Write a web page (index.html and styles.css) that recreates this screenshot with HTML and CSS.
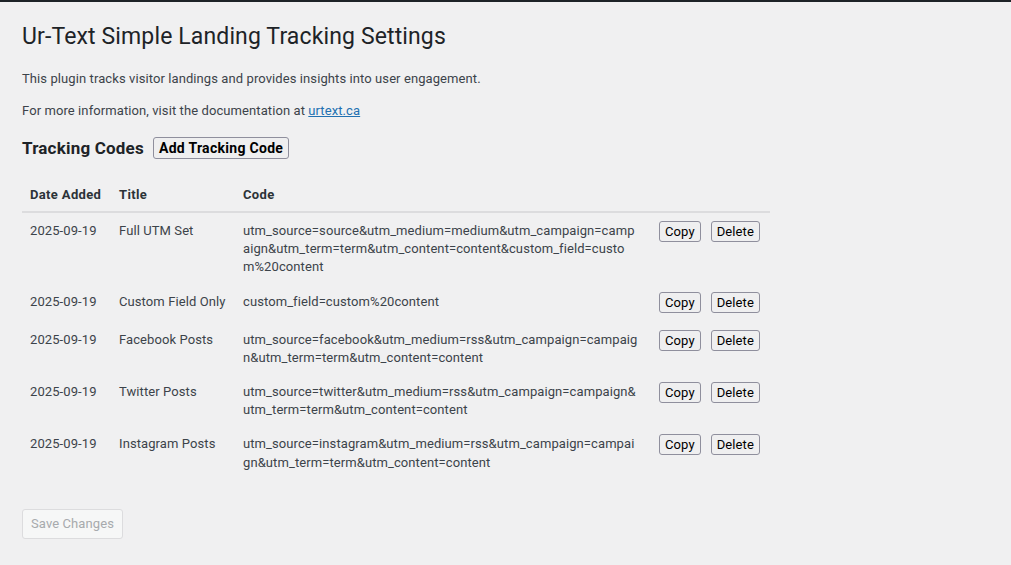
FILE: index.html
```html
<!DOCTYPE html>
<html lang="en">
<head>
<meta charset="utf-8">
<title>Ur-Text Simple Landing Tracking Settings</title>
<link rel="stylesheet" href="styles.css">
</head>
<body>
<div class="adminbar"></div>
<div class="wrap">
  <h1 class="page-title">Ur-Text Simple Landing Tracking Settings</h1>
  <p class="desc">This plugin tracks visitor landings and provides insights into user engagement.</p>
  <p class="desc">For more information, visit the documentation at <a href="#" class="link">urtext.ca</a></p>

  <h2 class="section-title"><span>Tracking Codes</span><button type="button" class="btn btn-add">Add Tracking Code</button></h2>

  <table class="codes">
    <colgroup>
      <col class="c-date"><col class="c-title"><col class="c-code"><col class="c-actions">
    </colgroup>
    <thead>
      <tr><th>Date Added</th><th>Title</th><th>Code</th><th></th></tr>
    </thead>
    <tbody>
      <tr>
        <td>2025-09-19</td><td>Full UTM Set</td>
        <td class="code">utm_source=source&amp;utm_medium=medium&amp;utm_campaign=campaign&amp;utm_term=term&amp;utm_content=content&amp;custom_field=custom%20content</td>
        <td class="actions"><div class="btns"><button type="button" class="btn">Copy</button><button type="button" class="btn">Delete</button></div></td>
      </tr>
      <tr>
        <td>2025-09-19</td><td>Custom Field Only</td>
        <td class="code">custom_field=custom%20content</td>
        <td class="actions"><div class="btns"><button type="button" class="btn">Copy</button><button type="button" class="btn">Delete</button></div></td>
      </tr>
      <tr>
        <td>2025-09-19</td><td>Facebook Posts</td>
        <td class="code">utm_source=facebook&amp;utm_medium=rss&amp;utm_campaign=campaign&amp;utm_term=term&amp;utm_content=content</td>
        <td class="actions"><div class="btns"><button type="button" class="btn">Copy</button><button type="button" class="btn">Delete</button></div></td>
      </tr>
      <tr>
        <td>2025-09-19</td><td>Twitter Posts</td>
        <td class="code">utm_source=twitter&amp;utm_medium=rss&amp;utm_campaign=campaign&amp;utm_term=term&amp;utm_content=content</td>
        <td class="actions"><div class="btns"><button type="button" class="btn">Copy</button><button type="button" class="btn">Delete</button></div></td>
      </tr>
      <tr>
        <td>2025-09-19</td><td>Instagram Posts</td>
        <td class="code">utm_source=instagram&amp;utm_medium=rss&amp;utm_campaign=campaign&amp;utm_term=term&amp;utm_content=content</td>
        <td class="actions"><div class="btns"><button type="button" class="btn">Copy</button><button type="button" class="btn">Delete</button></div></td>
      </tr>
    </tbody>
  </table>

  <div class="submit">
    <button type="button" class="btn-save" disabled>Save Changes</button>
  </div>
</div>
</body>
</html>
```
FILE: styles.css
```css
* { box-sizing: border-box; }

html, body {
  margin: 0;
  padding: 0;
  background: #f0f0f1;
}

body {
  font-family: Roboto, "Liberation Sans", sans-serif;
  font-size: 13px;
  line-height: 1.5;
  color: #3c434a;
  letter-spacing: 0.09px;
  min-height: 565px;
}

.adminbar {
  height: 2px;
  background: #1d2327;
}

.wrap {
  margin: 11px 20px 0 22px;
}

.page-title {
  margin: 0;
  padding: 9px 0 4px;
  font-size: 23px;
  font-weight: 400;
  line-height: 1.3;
  color: #1d2327;
  letter-spacing: 0.13px;
}

.desc {
  margin: 13px 0;
}

.link {
  color: #2271b1;
  text-decoration: underline;
}

.section-title {
  display: flex;
  align-items: center;
  gap: 9px;
  margin: 16px 0 18px;
  font-size: 17px;
  font-weight: 700;
  line-height: 22px;
  color: #1d2327;
  letter-spacing: 0.2px;
}

.btn {
  font-family: Roboto, "Liberation Sans", sans-serif;
  font-size: 13px;
  letter-spacing: 0.1px;
  color: #000;
  background: #efeff0;
  border: 1px solid #8f8f9d;
  border-radius: 3px;
  height: 21px;
  padding: 0 5px;
  line-height: 19px;
  cursor: pointer;
}

.btn-add {
  font-size: 14px;
  font-weight: 700;
  letter-spacing: 0.3px;
  height: 22px;
  line-height: 20px;
  padding: 0 5px;
}

.codes {
  width: 748px;
  border-collapse: collapse;
  table-layout: fixed;
}

.c-date { width: 89px; }
.c-title { width: 124px; }
.c-code { width: 416px; }
.c-actions { width: 119px; }

.codes th {
  text-align: left;
  font-weight: 700;
  color: #2c3338;
  padding: 9px 8px 7px;
  line-height: 1.4;
  letter-spacing: 0.35px;
  border-bottom: 2px solid #dcdcde;
}

.codes td {
  padding: 9px 8px 7px;
  line-height: 1.4;
  vertical-align: top;
}

.codes td.code {
  padding-right: 9.6px;
  word-break: break-all;
  overflow-wrap: anywhere;
}

.codes td.actions {
  padding: 8px 9px 9px 8px;
}

.btns {
  display: flex;
  gap: 10px;
}

.submit {
  margin-top: 30px;
}

.btn-save {
  font-family: Roboto, "Liberation Sans", sans-serif;
  font-size: 13px;
  letter-spacing: 0.1px;
  height: 30px;
  padding: 0 8px;
  line-height: 28px;
  color: #a7aaad;
  background: #f6f7f7;
  border: 1px solid #dcdcde;
  border-radius: 3px;
}
```
